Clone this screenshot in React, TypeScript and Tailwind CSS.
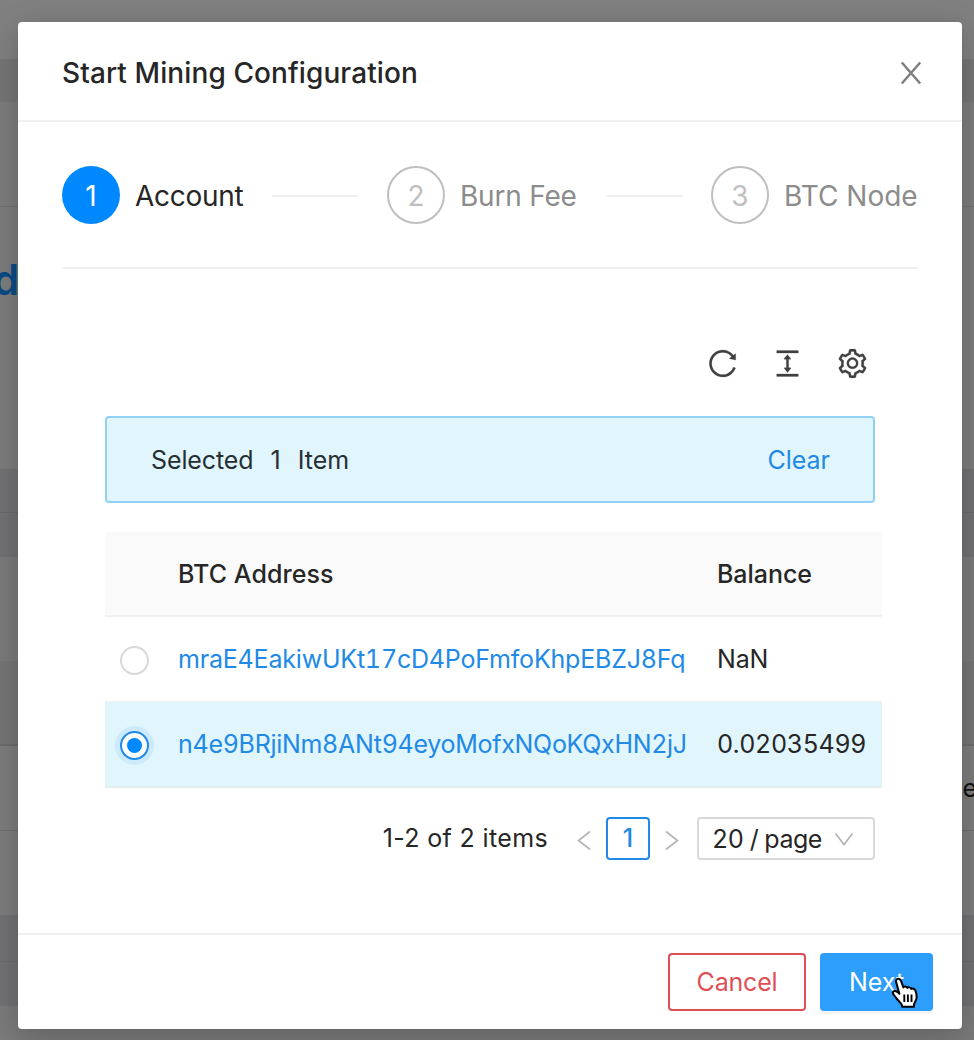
import React from "react";
import {
  AiOutlineColumnHeight,
  AiOutlineReload,
  AiOutlineSetting,
} from "react-icons/ai";

function Backdrop() {
  return (
    <div className="flex h-full flex-col bg-[#7c7c7c]">
      <div className="h-[59px] bg-[#808080]" />
      <div className="h-[43px] bg-[#757575]" />
      <div className="h-[105px] border-b border-[#707070] bg-[#7c7c7c]" />
      <div className="h-[262px] pt-[45px]">
        <span className="-ml-[7px] block text-[42px] leading-[56px] font-semibold text-[#0a4a85]">d</span>
      </div>
      <div className="h-[44px] border-b border-[#69696b] bg-[#717173]" />
      <div className="h-[44px] bg-[#717173]" />
      <div className="h-[104px] bg-[#7a7a7a]" />
      <div className="h-[85px] border-b-2 border-[#6c6c6c] bg-[#757575]" />
      <div className="flex h-[85px] items-center justify-end border-b border-[#6d6d6d]">
        <span className="-mr-[3px] pt-[2px] text-[25px] text-[#131313]">e</span>
      </div>
      <div className="h-[84px]" />
      <div className="h-[47px] border-b border-[#69696b] bg-[#717173]" />
      <div className="h-[44px] bg-[#717173]" />
      <div className="grow bg-[#7a7a7a]" />
    </div>
  );
}

function Step({ n, active = false }: { n: number; active?: boolean }) {
  return (
    <span
      className={
        active
          ? "flex size-[58px] shrink-0 items-center justify-center rounded-full bg-[#0088ff] pt-[2px] text-[28px] text-white"
          : "flex size-[58px] shrink-0 items-center justify-center rounded-full border-2 border-[#bfbfbf] pt-[2px] text-[28px] text-[#bfbfbf]"
      }
    >
      {n}
    </span>
  );
}

function Steps() {
  return (
    <div className="mx-[44px] flex h-[147px] items-center border-b-2 border-[#f0f0f0] text-[28px]">
      <div className="flex w-[325px] items-center">
        <Step n={1} active />
        <span className="ml-[15px] w-[108px] pt-[2px] tracking-[-0.3px] whitespace-nowrap text-[#262626]">Account</span>
        <span className="mt-[2px] ml-[29px] h-[2px] w-[86px] bg-[#f0f0f0]" />
      </div>
      <div className="flex w-[324px] items-center">
        <Step n={2} />
        <span className="ml-[15px] w-[117px] pt-[2px] tracking-[-0.2px] whitespace-nowrap text-[#8c8c8c]">Burn Fee</span>
        <span className="mt-[2px] ml-[29px] h-[2px] w-[77px] bg-[#f0f0f0]" />
      </div>
      <div className="flex items-center">
        <Step n={3} />
        <span className="ml-[15px] pt-[2px] whitespace-nowrap text-[#8c8c8c]">BTC Node</span>
      </div>
    </div>
  );
}

function Radio({ checked = false }: { checked?: boolean }) {
  if (!checked) {
    return <span className="mt-[2px] ml-[15px] block size-[29px] rounded-full border-2 border-[#d9d9d9] bg-white" />;
  }
  return (
    <span className="mt-[3px] ml-[15px] flex size-[29px] items-center justify-center rounded-full border-2 border-[#2189e6] bg-white shadow-[0_0_0_5px_#cdeafd]">
      <span className="size-[15px] rounded-full bg-[#0088ff]" />
    </span>
  );
}

const columns = "grid grid-cols-[73px_539px_165px] items-center";

function AddressTable() {
  return (
    <div className="mt-[29px] ml-[87px] w-[777px] text-[25px] text-[#262626] tabular-nums">
      <div className={`${columns} h-[85px] rounded-t-[4px] border-b-2 border-[#f0f0f0] bg-[#fafafa] font-medium`}>
        <span />
        <span className="pt-[2px] tracking-[0.05px]">BTC Address</span>
        <span className="pt-[2px] tracking-[-0.05px]">Balance</span>
      </div>
      <div className={`${columns} h-[85px] border-b border-[#f0f0f0]`}>
        <Radio />
        <span className="pt-[2px] tracking-[-0.2px] text-[#2189e6]">mraE4EakiwUKt17cD4PoFmfoKhpEBZJ8Fq</span>
        <span className="pt-[2px] tracking-[-0.2px]">NaN</span>
      </div>
      <div className={`${columns} h-[86px] border-b-2 border-[#e3eef3] bg-[#e1f5fd]`}>
        <Radio checked />
        <span className="pt-[2px] tracking-[-0.3px] text-[#2189e6]">n4e9BRjiNm8ANt94eyoMofxNQoKQxHN2jJ</span>
        <span className="pt-[2px] tracking-[-0.35px]">0.02035499</span>
      </div>
    </div>
  );
}

function Chevron({ d, className }: { d: string; className: string }) {
  return (
    <svg className={className} viewBox="0 0 20 20" fill="none" stroke="currentColor" strokeWidth="1.7">
      <path d={d} />
    </svg>
  );
}

function Pagination() {
  return (
    <div className="mt-[29px] mr-[87px] flex h-[43px] items-center justify-end text-[25px] text-[#262626]">
      <span className="mr-[26px] pt-[1px] tracking-[0.35px] whitespace-nowrap">1-2 of 2 items</span>
      <Chevron d="M16 1.500 4.500 10.500 16 19.500" className="mt-[3px] size-[20px] text-[#b4b4b4]" />
      <span className="ml-[12px] flex h-[43px] w-[44px] items-center justify-center rounded-[4px] border-2 border-[#2189e6] pt-[1px] font-medium text-[#2189e6]">
        1
      </span>
      <Chevron d="M4 1.500 15.500 10.500 4 19.500" className="mt-[3px] ml-[12px] size-[20px] text-[#b4b4b4]" />
      <span className="ml-[15px] flex h-[43px] w-[178px] items-center rounded-[4px] border-2 border-[#d9d9d9] pl-[13px]">
        <span className="w-[110px] pt-[2px] tracking-[-0.5px] whitespace-nowrap tabular-nums">20 / page</span>
        <Chevron d="M1.500 4.500 10 15.500 18.500 4.500" className="mt-[1px] ml-[12px] size-[20px] text-[#b4b4b4]" />
      </span>
    </div>
  );
}

function HandCursor() {
  return (
    <svg className="absolute top-[24px] left-[71px] h-[35px] w-[28px]" viewBox="0 0 28 35">
      <path
        d="M5.300 5.700C4.500 3.500 5.300 2.300 6.700 1.900c1.500-.4 2.800.5 3.400 2.200l2.300 6.300c.5-1.300 3.300-1.300 4 .5.900-1 3.200-.7 3.900 1 1.200-.7 3.400-.2 4.100 1.600.8 2.100 1.400 4.500 1.200 7.200-.2 2.700-1.900 4.700-2.600 6.600v2.500H11.300c-.2-2.300-1.500-3.800-3.300-5.500-2-1.900-3-4-4.800-5.900-1.200-1.300-1.800-2.800-.8-3.900 1.300-1.200 3.700-.2 6 2.300z"
        fill="white"
        stroke="black"
        strokeWidth="2"
        strokeLinejoin="round"
      />
      <path d="M13.300 17.500v7.500M16.900 17.500v7.500M20.500 17.500v7.500" stroke="black" strokeWidth="1.900" fill="none" />
    </svg>
  );
}

function Dialog() {
  return (
    <div className="absolute top-[22px] left-[18px] flex h-[1007px] w-[944px] flex-col rounded-[4px] bg-white shadow-[0_6px_28px_rgba(0,0,0,0.22)]">
      <div className="flex h-[100px] shrink-0 items-center justify-between border-b-2 border-[#f0f0f0] pr-[40px] pl-[44px]">
        <h1 className="pt-[3px] text-[28px] font-medium tracking-[0.1px] text-[#262626]">Start Mining Configuration</h1>
        <svg className="mt-[4px] h-[24px] w-[22px] text-[#7f7f7f]" viewBox="0 0 22 24" fill="none" stroke="currentColor" strokeWidth="2.500">
          <path d="M1.800 1.500 20.200 22.500M20.200 1.500 1.800 22.500" />
        </svg>
      </div>
      <Steps />
      <div className="mt-[77px] mr-[93px] flex h-[34px] items-center justify-end gap-[32px] text-[#404040]">
        <AiOutlineReload className="size-[33px]" stroke="currentColor" strokeWidth="6" />
        <AiOutlineColumnHeight className="size-[33px]" stroke="currentColor" strokeWidth="8" />
        <AiOutlineSetting className="size-[33px]" stroke="currentColor" strokeWidth="8" />
      </div>
      <div className="mt-[36px] ml-[87px] flex h-[87px] w-[770px] items-center justify-between rounded-[4px] border-2 border-[#91d0f5] bg-[#e1f5fd] pt-[2px] pr-[43px] pl-[44px] text-[25px] text-[#262f34]">
        <span className="flex gap-[17px]">
          <span className="tracking-[-0.1px]">Selected</span>
          <span>1</span>
          <span>Item</span>
        </span>
        <span className="text-[#2189e6]">Clear</span>
      </div>
      <AddressTable />
      <Pagination />
      <div className="mt-auto flex h-[96px] items-center justify-end gap-[14px] border-t-2 border-[#f0f0f0] pr-[29px] pb-[1px] text-[25px]">
        <button className="h-[58px] w-[138px] rounded-[4px] border-2 border-[#e04f56] pt-[2px] tracking-[-0.2px] text-[#e04f56]">Cancel</button>
        <button className="relative h-[58px] w-[113px] rounded-[4px] bg-[#2d9efb] pt-[2px] text-white shadow-[0_3px_0_rgba(0,0,0,0.04)]">
          Next
          <HandCursor />
        </button>
      </div>
    </div>
  );
}

export default function App() {
  return (
    <div className="relative h-[1040px] w-[974px] overflow-hidden font-['Inter',sans-serif]">
      <Backdrop />
      <Dialog />
    </div>
  );
}
